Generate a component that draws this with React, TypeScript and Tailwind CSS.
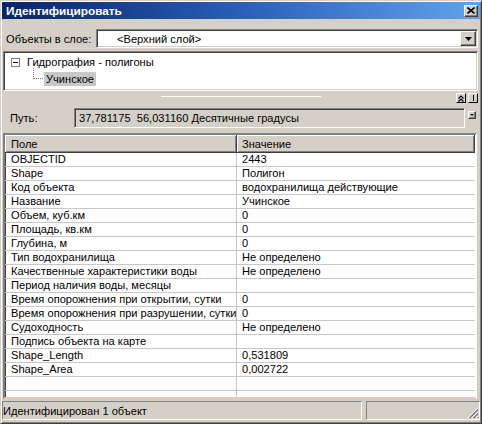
import React from "react";

const rows: [string, string][] = [
  ["OBJECTID", "2443"],
  ["Shape", "Полигон"],
  ["Код объекта", "водохранилища действующие"],
  ["Название", "Учинское"],
  ["Объем, куб.км", "0"],
  ["Площадь, кв.км", "0"],
  ["Глубина, м", "0"],
  ["Тип водохранилища", "Не определено"],
  ["Качественные характеристики воды", "Не определено"],
  ["Период наличия воды, месяцы", ""],
  ["Время опорожнения при открытии, сутки", "0"],
  ["Время опорожнения при разрушении, сутки", "0"],
  ["Судоходность", "Не определено"],
  ["Подпись объекта на карте", ""],
  ["Shape_Length", "0,531809"],
  ["Shape_Area", "0,002722"],
  ["", ""],
  ["", ""],
];

const sunken =
  "border border-t-[#808080] border-l-[#808080] border-r-white border-b-white shadow-[inset_1px_1px_0_#404040,inset_-1px_-1px_0_#d4d0c8]";
const raised =
  "border border-t-white border-l-white border-r-[#404040] border-b-[#404040] shadow-[inset_-1px_-1px_0_#808080]";

function DownArrow({ size = 7 }: { size?: number }) {
  return (
    <svg width={size} height={Math.ceil(size / 2)} viewBox="0 0 7 4">
      <path d="M0 0h7L3.5 4z" fill="#000" />
    </svg>
  );
}

export default function App() {
  return (
    <div className="w-[482px] h-[424px] bg-[#d4d0c8] border border-[#d4d0c8] border-r-[#404040] border-b-[#404040] font-['Liberation_Sans',Arial,sans-serif] text-[11.1px] text-black leading-[14px]">
      <div className="h-full flex flex-col p-[1px] pb-[2px] shadow-[inset_1px_1px_0_#fff,inset_-1px_-1px_0_#808080]">
        {/* title bar */}
        <div className="h-[17px] shrink-0 flex items-center justify-between bg-gradient-to-r from-[#0a246a] via-[#2a5fb8] to-[#5fa4ec] pl-[4px] pr-[2px]">
          <span className="text-white font-bold text-[11.8px]">Идентифицировать</span>
          <div className={`w-[14px] h-[12px] bg-[#d4d0c8] flex items-center justify-center ${raised}`}>
            <svg width="8" height="7" viewBox="0 0 8 7">
              <path d="M0.5 0.5l7 6M7.5 0.5l-7 6" stroke="#000" strokeWidth="1.6" />
            </svg>
          </div>
        </div>

        {/* layer combo */}
        <div className="mt-[10px] h-[19px] shrink-0 flex items-center justify-between pl-[4px] pr-[2px]">
          <span className="whitespace-nowrap">Объекты в слое:</span>
          <div className={`w-[382px] h-[19px] bg-white flex items-center ${sunken}`}>
            <span className="flex-1 pl-[20px]">&lt;Верхний слой&gt;</span>
            <div className={`w-[16px] h-[15px] mr-[1px] bg-[#d4d0c8] flex items-center justify-center ${raised}`}>
              <DownArrow />
            </div>
          </div>
        </div>

        {/* tree */}
        <div className={`mt-[3px] ml-[1px] mr-[2px] h-[40px] shrink-0 bg-white ${sunken} pt-[3px]`}>
          <div className="flex items-center h-[14px]">
            <div className="ml-[7px] w-[9px] h-[9px] border border-[#808080] flex items-center justify-center">
              <div className="w-[5px] h-[1px] bg-black" />
            </div>
            <span className="ml-[7px]">Гидрография - полигоны</span>
          </div>
          <div className="flex items-end h-[16px] mt-[1px]">
            <svg width="12" height="12" viewBox="0 0 12 12" className="ml-[29px] mb-[6px]">
              <path d="M0.5 0v11M1 10.5h11" stroke="#808080" strokeDasharray="1 1" />
            </svg>
            <span className="bg-[#c8c8c8] px-[2px] h-[14px] ml-[-1px]">Учинское</span>
          </div>
        </div>

        {/* splitter */}
        <div className="h-[12px] shrink-0 grid grid-cols-[1fr_160px_1fr]">
          <div />
          <div className="h-[1px] bg-white mt-[5px]" />
          <div className="flex justify-end items-start gap-[2px] pt-[2px] pr-[2px]">
            <div className="w-[10px] h-[10px] border border-t-white border-l-white border-r-black border-b-black flex items-center justify-center">
              <svg width="6" height="7" viewBox="0 0 6 7">
                <path d="M0.5 3.5L3 1l2.5 2.5M0.5 6.5L3 4l2.5 2.5" stroke="#000" fill="none" strokeWidth="1.2" />
              </svg>
            </div>
            <div className="w-[10px] h-[10px] border border-t-white border-l-white border-r-black border-b-black flex items-center justify-center">
              <div className="w-[1px] h-[6px] bg-black" />
            </div>
          </div>
        </div>

        {/* path */}
        <div className="mt-[5px] h-[20px] shrink-0 flex items-start pl-[8px]">
          <span className="w-[64px] leading-[20px]">Путь:</span>
          <div className={`w-[391px] h-[20px] flex items-center pl-[4px] whitespace-nowrap ${sunken}`}>
            37,781175&nbsp;&nbsp;56,031160 Десятичные градусы
          </div>
          <div className={`ml-[3px] mt-[3px] w-[8px] h-[8px] bg-[#d4d0c8] flex items-center justify-center ${raised}`}>
            <svg width="4" height="2" viewBox="0 0 4 2">
              <path d="M0 0h4L2 2z" fill="#000" />
            </svg>
          </div>
        </div>

        {/* table */}
        <div className="mt-[5px] ml-[1px] w-[474px] h-[266px] shrink-0 flex flex-col overflow-hidden bg-white border-2 border-t-[#808080] border-l-[#808080] border-r-white border-b-[#d4d0c8] shadow-[inset_1px_1px_0_#404040]">
          <div className="h-[18px] shrink-0 flex bg-[#d4d0c8]">
            <div className="w-[232px] h-full flex items-center pl-[6px] border-r border-b border-[#404040] shadow-[inset_1px_1px_0_#fff,inset_-1px_-1px_0_#808080]">
              Поле
            </div>
            <div className="flex-1 h-full flex items-center pl-[5px] border-r border-b border-[#404040] shadow-[inset_1px_1px_0_#fff,inset_-1px_-1px_0_#808080]">
              Значение
            </div>
          </div>
          <div className="flex-1 overflow-hidden">
            {rows.map(([k, v], i) => (
              <div key={i} className="h-[14px] leading-[13px] flex border-b border-[#c8c8c8]">
                <div className="w-[232px] pl-[6px] border-r border-[#c8c8c8] whitespace-nowrap overflow-hidden">{k}</div>
                <div className="flex-1 pl-[5px] whitespace-nowrap">{v}</div>
              </div>
            ))}
          </div>
        </div>

        {/* status bar */}
        <div className="mt-[2px] h-[19px] shrink-0 flex">
          <div className="w-[360px] h-full flex items-center whitespace-nowrap border border-t-[#808080] border-l-[#808080] border-r-white border-b-white">
            Идентифицирован 1 объект
          </div>
          <div className="ml-[4px] flex-1 h-full flex items-end justify-end border border-t-[#808080] border-l-[#808080] border-r-white border-b-white">
            <svg width="12" height="12" viewBox="0 0 12 12">
              <path d="M11 1L1 11M11 5L5 11M11 9L9 11" stroke="#fff" strokeWidth="1" />
              <path d="M11 2L2 11M11 3L3 11M11 6L6 11M11 7L7 11M11 10L10 11" stroke="#808080" strokeWidth="1" />
            </svg>
          </div>
        </div>
      </div>
    </div>
  );
}
